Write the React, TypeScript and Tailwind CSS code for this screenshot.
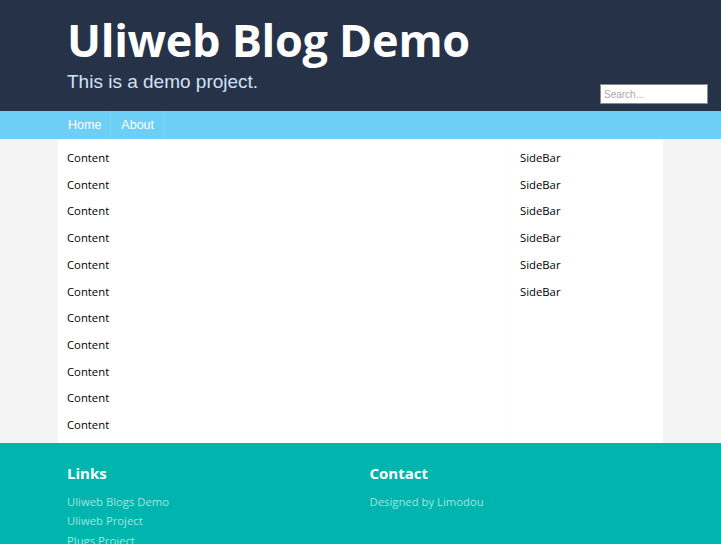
import React from 'react';

const sans = "font-['Open_Sans','Noto_Sans',sans-serif]";

export default function App() {
  const contentRows = Array.from({ length: 11 });
  const sideRows = Array.from({ length: 6 });

  return (
    <div className="min-h-screen bg-[#f4f4f4] font-['Open_Sans','Noto_Sans',sans-serif]">
      {/* Header */}
      <header className="bg-[#263248] h-[111px]">
        <div className="w-[605px] mx-auto relative h-full px-[9px] pt-[12px]">
          <h1 className="text-[45px] leading-[56px] font-bold text-white tracking-[-0.3px]">
            Uliweb Blog Demo
          </h1>
          <p className="font-['Liberation_Sans',Arial,sans-serif] text-[19px] leading-[22px] text-[#d0e2f7] mt-[3px]">
            This is a demo project.
          </p>
          <input
            placeholder="Search..."
            className="absolute right-[-45px] top-[84px] w-[108px] h-[20px] bg-white border border-[#8a8a8a] px-[3px] text-[10px] font-['Liberation_Sans',Arial,sans-serif] placeholder:text-[#a8a8b0] outline-none"
          />
        </div>
      </header>

      {/* Nav */}
      <nav className="bg-[#6dcff6] h-[28px]">
        <div className="w-[605px] mx-auto flex h-full font-['Liberation_Sans',Arial,sans-serif] text-[12.5px] text-white">
          <a className="flex items-center pl-[10px] pr-[9px] border-r border-[#7fd6f7]">Home</a>
          <a className="flex items-center pl-[10px] pr-[9px] border-r border-[#7fd6f7]">About</a>
        </div>
      </nav>

      {/* Main */}
      <main className="w-[605px] mx-auto bg-white flex pt-[6px] pb-[4px] text-[11.3px] text-black">
        <div className="w-[452px] px-[9px] border-r border-[#fbfbfb]">
          {contentRows.map((_, i) => (
            <div key={i} className="leading-[26.7px]">Content</div>
          ))}
        </div>
        <div className="flex-1 pl-[10px] pr-[9px]">
          {sideRows.map((_, i) => (
            <div key={i} className="leading-[26.7px]">SideBar</div>
          ))}
        </div>
      </main>

      {/* Footer */}
      <footer className="bg-[#00b5ad] pb-[40px]">
        <div className={`w-[605px] mx-auto grid grid-cols-2 pt-[19px] ${sans}`}>
          <div className="px-[9px]">
            <h3 className="text-[15px] leading-[22px] font-bold text-white">Links</h3>
            <ul className="mt-[8px] text-[11.3px] leading-[19.5px] text-[#a3e4e0]">
              <li>Uliweb Blogs Demo</li>
              <li>Uliweb Project</li>
              <li>Plugs Project</li>
            </ul>
          </div>
          <div className="px-[9px]">
            <h3 className="text-[15px] leading-[22px] font-bold text-white">Contact</h3>
            <ul className="mt-[8px] text-[11.3px] leading-[19.5px] text-[#a3e4e0]">
              <li>Designed by Limodou</li>
            </ul>
          </div>
        </div>
      </footer>
    </div>
  );
}
